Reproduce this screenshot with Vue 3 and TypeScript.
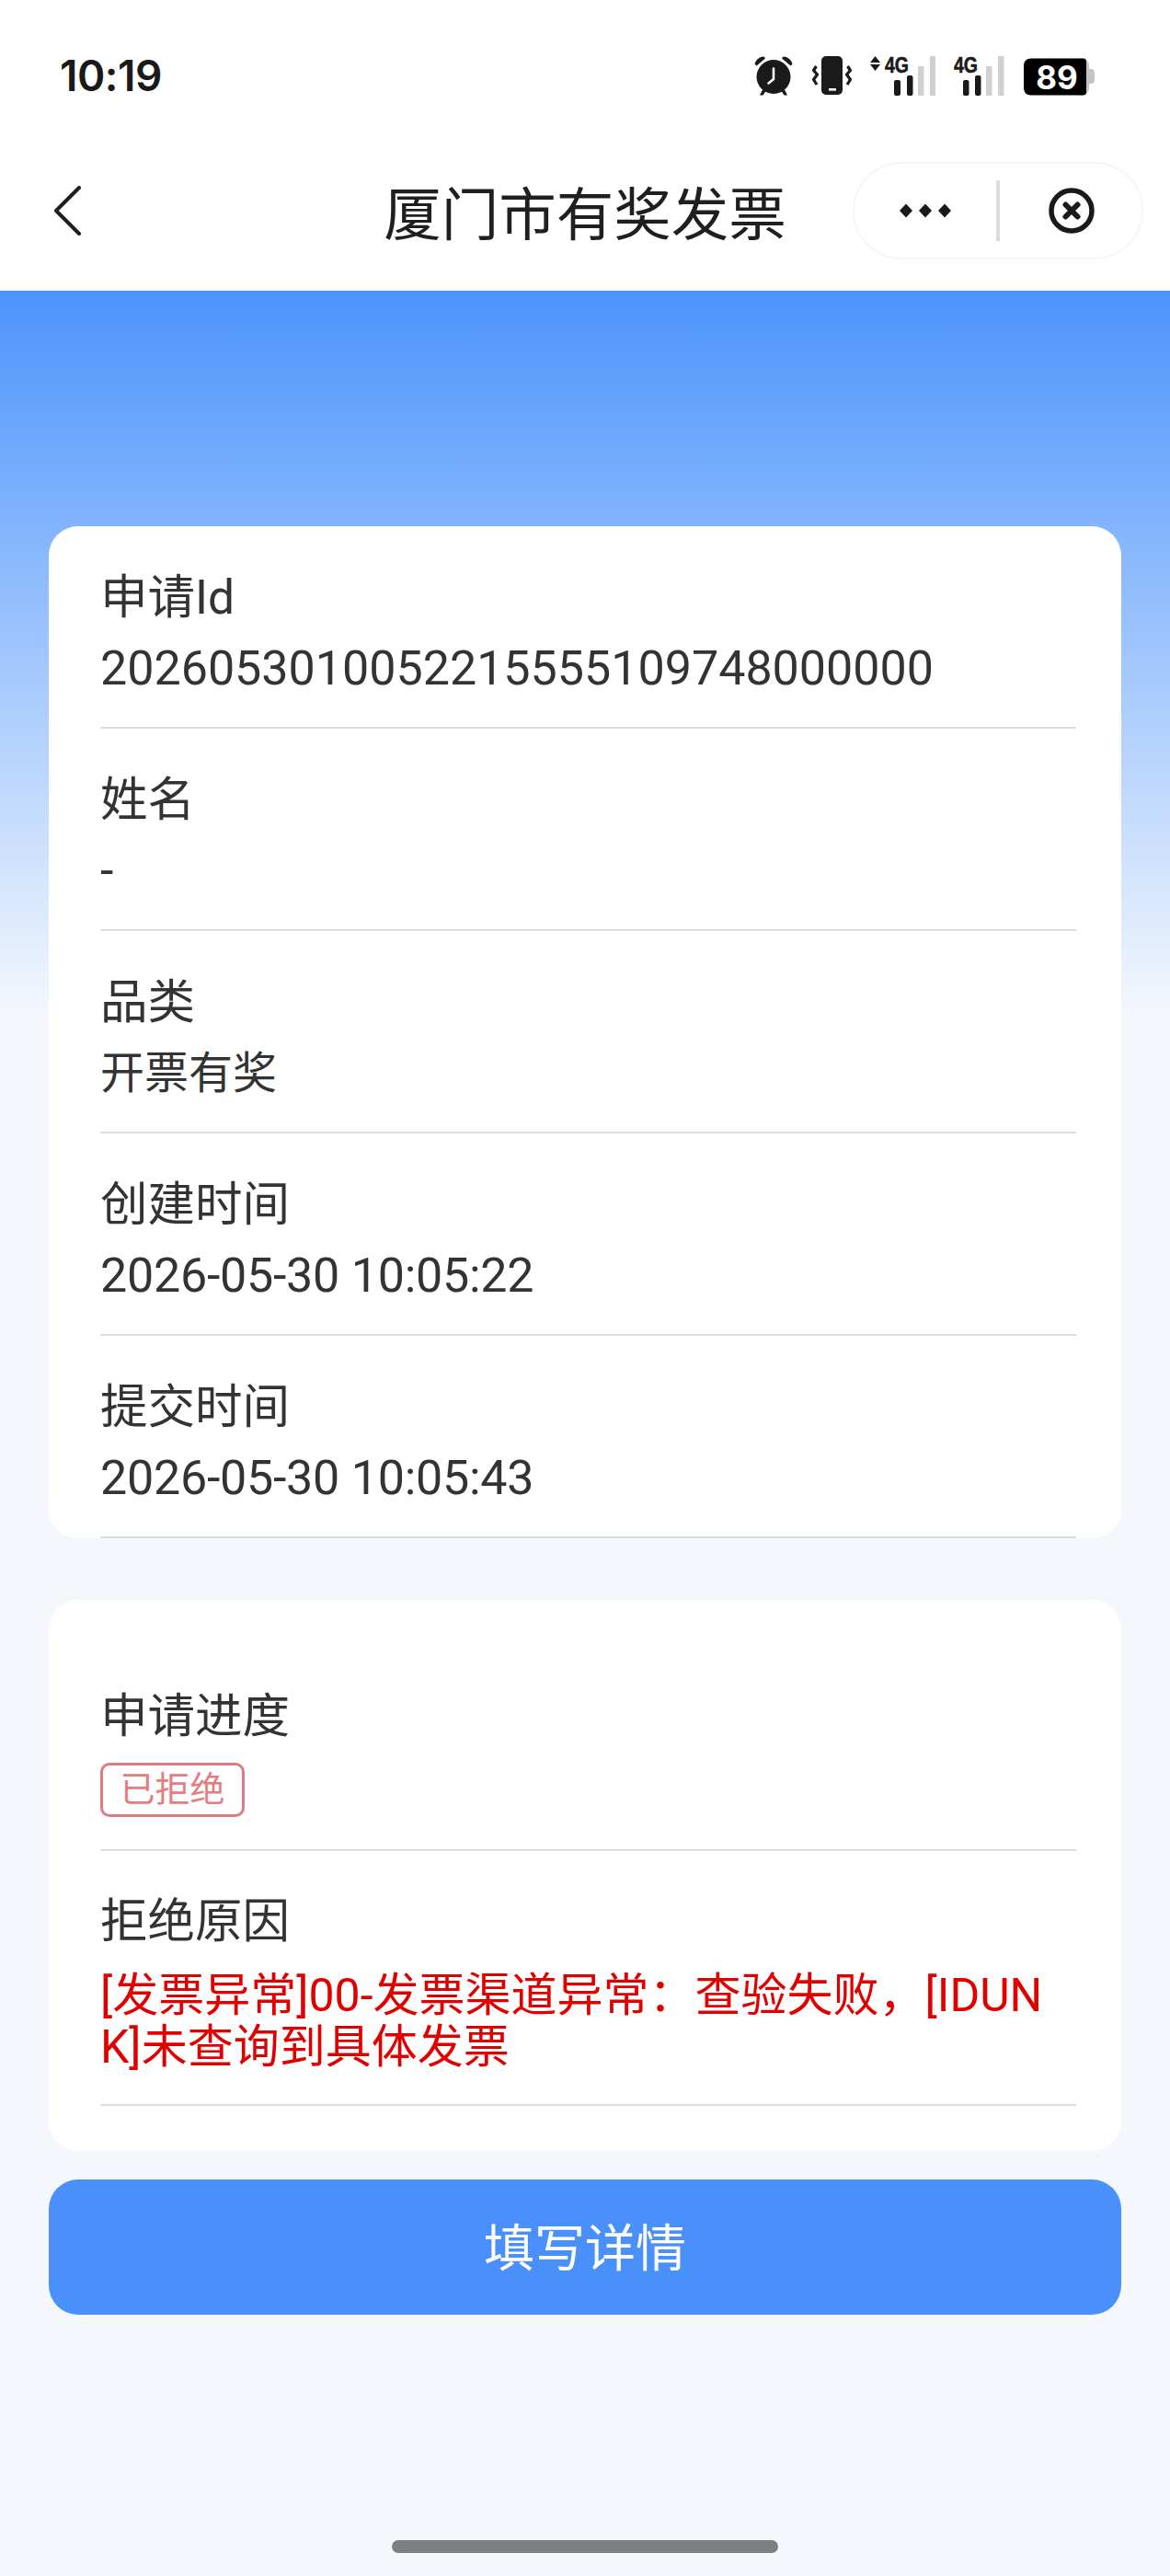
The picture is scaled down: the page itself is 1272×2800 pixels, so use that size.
<script setup lang="ts">
interface Row {
  label: string
  value: string
  kind?: 'cjk' | 'date'
}
const rows: Row[] = [
  { label: '申请Id', value: '2026053010052215555109748000000' },
  { label: '姓名', value: '-' },
  { label: '品类', value: '开票有奖', kind: 'cjk' },
  { label: '创建时间', value: '2026-05-30 10:05:22', kind: 'date' },
  { label: '提交时间', value: '2026-05-30 10:05:43', kind: 'date' },
]
</script>

<template>
  <div class="page">
    <header class="top">
      <div class="status">
        <span class="time">10:19</span>
        <div class="status-icons">
          <svg class="ic-alarm" viewBox="0 -4 44 52" aria-hidden="true">
            <circle cx="22" cy="23.5" r="18.5" fill="#1a1a1a" />
            <path d="M1.5 9.5C3 4.5 7 1.5 11.5 1.5L13 3.5 3.5 11.500Z" fill="#1a1a1a" />
            <path d="M42.5 9.5C41 4.5 37 1.5 32.5 1.5L31 3.5 40.5 11.500Z" fill="#1a1a1a" />
            <path d="M10 37.500 7 43.500h3.500l3-4.500ZM34 37.500l3 6h-3.500l-3-4.500Z" fill="#1a1a1a" />
            <path d="M22 14.500V26L16.500 30.500" fill="none" stroke="#fff" stroke-width="2.600" stroke-linecap="round" stroke-linejoin="round" />
          </svg>
          <svg class="ic-vibrate" viewBox="0 -4 43 52" aria-hidden="true">
            <rect x="10" y="1" width="23" height="42" rx="5" fill="#1a1a1a" />
            <rect x="18" y="36" width="8" height="2.600" fill="#fff" />
            <path d="M4.500 12 1.500 16.500 5.500 21 1.500 26.500 5 32" fill="none" stroke="#1a1a1a" stroke-width="3.200" stroke-linejoin="round" />
            <path d="M38.500 12 41.500 16.500 37.500 21 41.500 26.500 38 32" fill="none" stroke="#1a1a1a" stroke-width="3.200" stroke-linejoin="round" />
          </svg>
          <svg class="ic-sig1" viewBox="0 -4 71 52" aria-hidden="true">
            <path d="M5.500 1 11 8H0ZM5.500 17 0 10h11Z" fill="#1a1a1a" />
            <text x="16" y="18.500" class="sig-text" textLength="26" lengthAdjust="spacingAndGlyphs">4G</text>
            <rect x="26" y="27" width="7" height="17" rx="2" fill="#1a1a1a" />
            <rect x="40" y="22" width="6.500" height="22" rx="2" fill="#1a1a1a" />
            <rect x="52" y="12" width="6.500" height="32" rx="1" fill="#d0d0d0" />
            <rect x="65" y="1" width="6" height="43" rx="1" fill="#d0d0d0" />
          </svg>
          <svg class="ic-sig2" viewBox="0 -4 55 52" aria-hidden="true">
            <text x="0" y="18.500" class="sig-text" textLength="26" lengthAdjust="spacingAndGlyphs">4G</text>
            <rect x="10" y="27" width="6.500" height="17" rx="2" fill="#1a1a1a" />
            <rect x="23" y="22" width="6.500" height="22" rx="2" fill="#1a1a1a" />
            <rect x="35" y="12" width="6.500" height="32" rx="1" fill="#d0d0d0" />
            <rect x="48" y="1" width="6.500" height="43" rx="1" fill="#d0d0d0" />
          </svg>
          <svg class="ic-batt" viewBox="0 -4 78 52" aria-hidden="true">
            <path d="M60 3.500h4c4.500 0 8 3.500 8 8v24c0 4.500-3.500 8-8 8h-4Z" fill="#c4c4c4" />
            <path d="M72 15h2c2.500 0 4 1.500 4 4v8c0 2.500-1.500 4-4 4h-2Z" fill="#c4c4c4" />
            <path d="M9 3.500h56c3 0 4 1 4 4v32c0 3-1 4-4 4H9c-5 0-8-3-8-8V11.500c0-5 3-8 8-8Z" fill="#000" />
            <text x="37" y="36.500" class="batt-text" text-anchor="middle">89</text>
          </svg>
        </div>
      </div>
      <nav class="nav">
        <div class="nav-left">
          <svg class="back" viewBox="0 0 30 54" aria-hidden="true">
            <path d="M28 2 3 27l25 25" fill="none" stroke="#1f1f1f" stroke-width="4" stroke-linecap="round" stroke-linejoin="round" />
          </svg>
        </div>
        <h1 class="title">厦门市有奖发票</h1>
        <div class="nav-right">
          <div class="capsule">
            <div class="capsule-cell">
              <svg class="dots" viewBox="0 0 56 16" aria-hidden="true">
                <path d="M7 0.500 14 8 7 15.500 0 8ZM28 0.500 35 8 28 15.500 21 8ZM49 0.500 56 8 49 15.500 42 8Z" fill="#1a1a1a" />
              </svg>
            </div>
            <span class="capsule-sep"></span>
            <div class="capsule-cell">
              <svg class="close" viewBox="0 0 52 52" aria-hidden="true">
                <circle cx="26" cy="26" r="22" fill="none" stroke="#1a1a1a" stroke-width="5.500" />
                <path d="M19.500 19.500 32.500 32.500M32.500 19.500 19.500 32.500" fill="none" stroke="#1a1a1a" stroke-width="6" stroke-linecap="round" />
              </svg>
            </div>
          </div>
        </div>
      </nav>
    </header>

    <main class="content">
      <section class="card card-info">
        <div v-for="row in rows" :key="row.label" class="row">
          <div class="label">{{ row.label }}</div>
          <div class="value" :class="row.kind ? `value-${row.kind}` : ''">{{ row.value }}</div>
        </div>
      </section>

      <section class="card card-progress">
        <div class="row-progress">
          <div class="label">申请进度</div>
          <span class="tag">已拒绝</span>
        </div>
        <div class="row-reason">
          <div class="label">拒绝原因</div>
          <div class="reason">[发票异常]00-发票渠道异常：查验失败，[IDUNK]未查询到具体发票</div>
        </div>
      </section>

      <button class="action" type="button">填写详情</button>

      <div class="home-bar"></div>
    </main>
  </div>
</template>

<style>
html,
body {
  margin: 0;
  background: #f4f8fd;
}
</style>

<style scoped>
.page {
  width: 1272px;
  height: 2800px;
  display: flex;
  flex-direction: column;
  background: #f4f8fd;
  font-family: Roboto, "Noto Sans CJK SC", sans-serif;
  color: #333;
}
.top {
  background: #fff;
  height: 316px;
  flex: none;
}
.status {
  height: 157px;
  box-sizing: border-box;
  padding: 56px 82px 0 65px;
  display: flex;
  justify-content: space-between;
  align-items: flex-start;
}
.time {
  font-family: Inter, "Liberation Sans", sans-serif;
  font-weight: 600;
  font-size: 46px;
  line-height: 52px;
  color: #1a1a1a;
  letter-spacing: -0.5px;
}
.status-icons {
  display: flex;
  gap: 20px;
}
.status-icons svg {
  height: 52px;
  display: block;
}
.ic-alarm { width: 44px; }
.ic-vibrate { width: 43px; }
.ic-sig1 { width: 71px; }
.ic-sig2 { width: 55px; }
.ic-batt { width: 78px; }
.sig-text {
  font-family: "Liberation Sans", sans-serif;
  font-weight: 700;
  font-size: 24px;
  fill: #1a1a1a;
  stroke: #1a1a1a;
  stroke-width: 0.6px;
}
.batt-text {
  font-family: Inter, "Liberation Sans", sans-serif;
  font-weight: 700;
  font-size: 35px;
  fill: #fff;
}
.nav {
  height: 143px;
  display: grid;
  grid-template-columns: 1fr auto 1fr;
  align-items: center;
}
.nav-left {
  padding-left: 58px;
  display: flex;
}
.back {
  width: 30px;
  height: 54px;
}
.title {
  margin: 0;
  font-family: "Noto Sans CJK SC", sans-serif;
  font-weight: 400;
  font-size: 62.5px;
  line-height: 76px;
  color: #1f1f1f;
}
.nav-right {
  display: flex;
  justify-content: flex-end;
  padding-right: 29px;
}
.capsule {
  width: 316px;
  height: 106px;
  box-sizing: border-box;
  border: 2px solid #f6f6f6;
  border-radius: 53px;
  display: flex;
  align-items: center;
  background: #fff;
}
.capsule-cell {
  flex: 1;
  display: flex;
  justify-content: center;
  align-items: center;
}
.capsule-sep {
  width: 4px;
  height: 66px;
  background: #dcdcdc;
  flex: none;
}
.dots {
  width: 56px;
  height: 16px;
}
.close {
  width: 52px;
  height: 52px;
  margin-left: 2px;
}
.content {
  flex: 1;
  display: flex;
  flex-direction: column;
  padding: 256px 53px 0;
  background: linear-gradient(180deg, #4c94fc 0, #f4f8fd 790px);
}
.card {
  background: #fff;
  border-radius: 32px;
  padding: 0 49px 0 56px;
}
.card-info {
  height: 1100px;
  box-sizing: border-box;
}
.row {
  box-sizing: border-box;
  height: 220px;
  padding-top: 38px;
  border-bottom: 2px solid #dcdcdc;
}
.label {
  font-size: 51.5px;
  line-height: 80px;
  color: #333;
}
.value {
  font-size: 52px;
  line-height: 74px;
  color: #333;
}
.value-cjk {
  font-size: 48px;
}
.value-date {
  letter-spacing: -0.25px;
}
.card-progress {
  margin-top: 67px;
  padding-top: 87px;
  padding-bottom: 49px;
}
.row-progress {
  padding-bottom: 35px;
  border-bottom: 2px solid #dcdcdc;
}
.tag {
  display: block;
  width: 157px;
  height: 59px;
  margin-top: 10px;
  box-sizing: border-box;
  border: 3px solid #dd7c80;
  border-radius: 10px;
  text-align: center;
  font-size: 38px;
  line-height: 52px;
  color: #e57c80;
}
.row-reason {
  padding-top: 37px;
  padding-bottom: 34px;
  border-bottom: 2px solid #dcdcdc;
}
.reason {
  margin-top: 12px;
  max-width: 1050px;
  font-size: 50px;
  line-height: 56px;
  color: #e00000;
  word-break: break-all;
}
.action {
  margin-top: 31px;
  height: 147px;
  flex: none;
  border: none;
  border-radius: 32px;
  background: #4a90fb;
  color: #fff;
  font-family: Roboto, "Noto Sans CJK SC", sans-serif;
  font-size: 55px;
  line-height: 140px;
  padding: 2px 0 0;
}
.home-bar {
  width: 420px;
  height: 14px;
  border-radius: 7px;
  background: #7c7f80;
  margin: auto auto 25px;
}
</style>
